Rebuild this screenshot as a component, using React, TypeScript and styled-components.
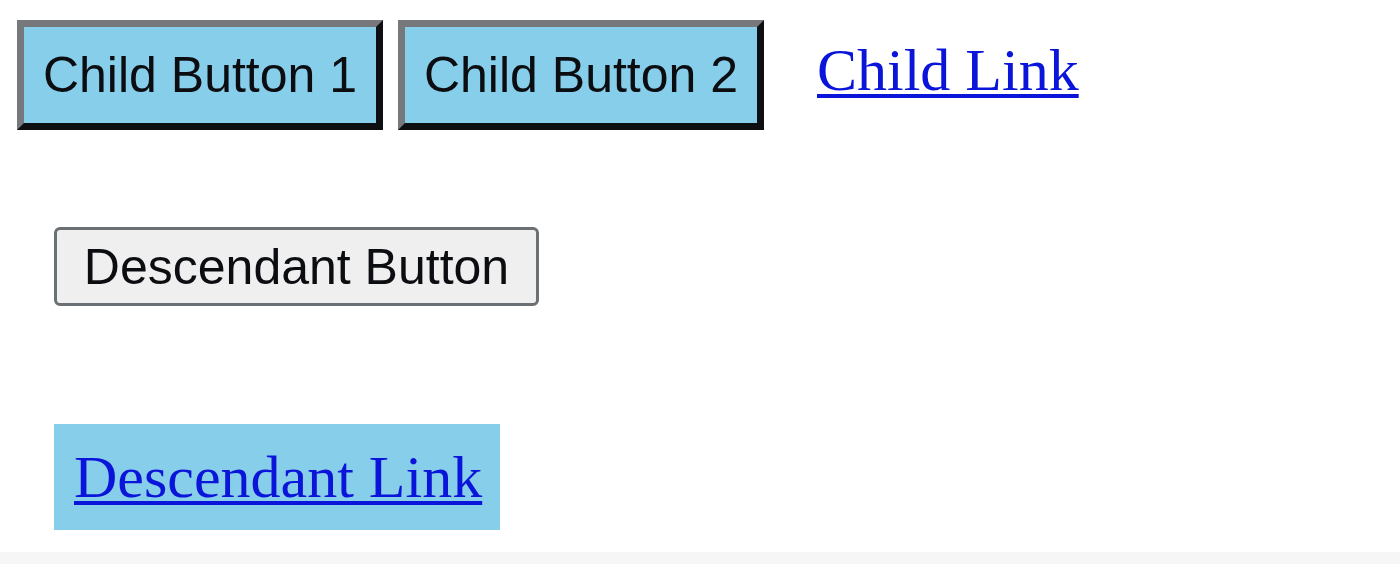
import React from "react";
import styled, { createGlobalStyle } from "styled-components";

const GlobalStyle = createGlobalStyle`
  html, body { margin: 0; padding: 0; background: #ffffff; }
  body { font-family: "Liberation Serif", "Times New Roman", serif; }
`;

const Page = styled.div`
  width: 1400px;
  height: 564px;
  display: flex;
  flex-direction: column;
  box-sizing: border-box;
  overflow: hidden;
`;

const Content = styled.div`
  display: flex;
  flex-direction: column;
  align-items: flex-start;
  padding: 20px 0 0 17px;
`;

const ChildRow = styled.div`
  display: flex;
  align-items: flex-start;
  gap: 15px;
`;

const ChildButton = styled.button`
  box-sizing: border-box;
  width: 366px;
  height: 110px;
  padding: 0;
  margin: 0;
  background: #87ceeb;
  border-width: 7px;
  border-style: solid;
  border-color: #76787b #0d0f11 #0d0f11 #76787b;
  font-family: "Liberation Sans", Arial, sans-serif;
  font-size: 50px;
  line-height: 1;
  color: #0b0d10;
  display: flex;
  align-items: center;
  justify-content: center;
`;

const Link = styled.a<{ $boxed?: boolean }>`
  font-family: "Liberation Serif", "Times New Roman", serif;
  font-size: 60px;
  line-height: 1;
  color: #0b14d9;
  text-decoration: underline;
  text-decoration-thickness: 4px;
  text-underline-offset: 4px;
  cursor: pointer;
`;

const ChildLink = styled(Link)`
  margin: 20px 0 0 38px;
`;

const Descendants = styled.div`
  display: flex;
  flex-direction: column;
  align-items: flex-start;
  padding-left: 37px;
  margin-top: 97px;
`;

const DescButton = styled.button`
  box-sizing: border-box;
  width: 485px;
  height: 79px;
  margin: 0;
  padding: 0;
  background: #efefef;
  border: 3px solid #6b7075;
  border-radius: 6px;
  font-family: "Liberation Sans", Arial, sans-serif;
  font-size: 50px;
  line-height: 1;
  color: #0b0d10;
  display: flex;
  align-items: center;
  justify-content: center;
`;

const LinkBox = styled.div`
  box-sizing: border-box;
  margin-top: 118px;
  width: 446px;
  height: 106px;
  padding: 23px 0 0 20px;
  background: #87ceeb;
`;

const Footer = styled.div`
  margin-top: auto;
  height: 12px;
  background: #f6f6f6;
`;

export default function App() {
  return (
    <>
      <GlobalStyle />
      <Page>
        <Content>
          <ChildRow>
            <ChildButton>Child Button 1</ChildButton>
            <ChildButton>Child Button 2</ChildButton>
            <ChildLink href="#">Child Link</ChildLink>
          </ChildRow>
          <Descendants>
            <DescButton>Descendant Button</DescButton>
            <LinkBox>
              <Link href="#">Descendant Link</Link>
            </LinkBox>
          </Descendants>
        </Content>
        <Footer />
      </Page>
    </>
  );
}
